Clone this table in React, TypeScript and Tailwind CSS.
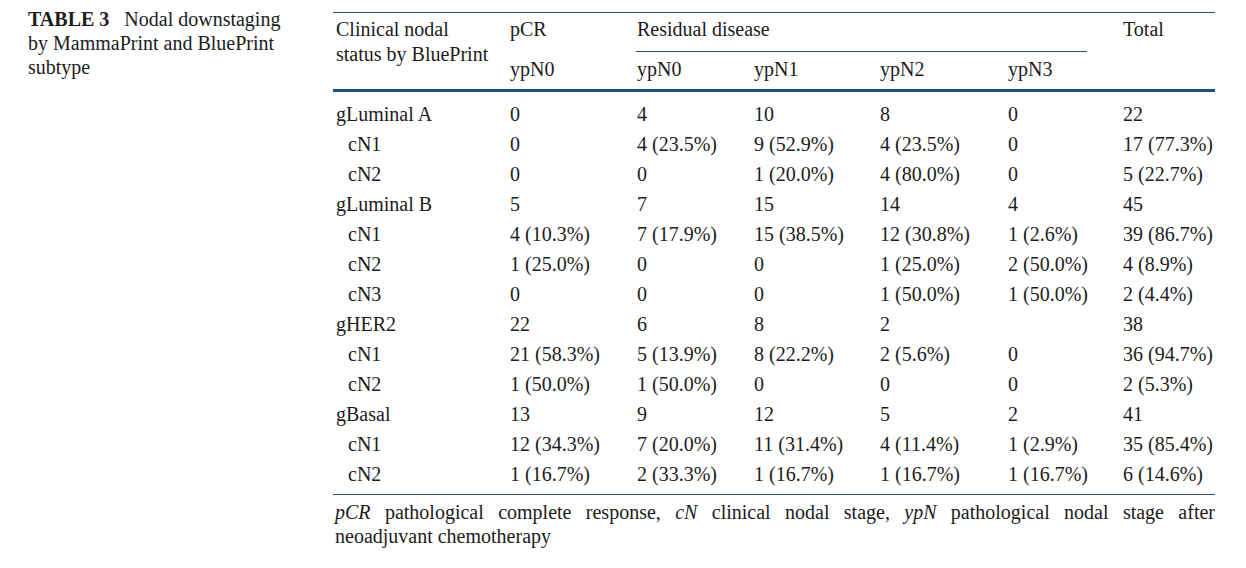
const rows: { label: string; sub?: boolean; cells: string[] }[] = [
  { label: "gLuminal A", cells: ["0", "4", "10", "8", "0", "22"] },
  { label: "cN1", sub: true, cells: ["0", "4 (23.5%)", "9 (52.9%)", "4 (23.5%)", "0", "17 (77.3%)"] },
  { label: "cN2", sub: true, cells: ["0", "0", "1 (20.0%)", "4 (80.0%)", "0", "5 (22.7%)"] },
  { label: "gLuminal B", cells: ["5", "7", "15", "14", "4", "45"] },
  { label: "cN1", sub: true, cells: ["4 (10.3%)", "7 (17.9%)", "15 (38.5%)", "12 (30.8%)", "1 (2.6%)", "39 (86.7%)"] },
  { label: "cN2", sub: true, cells: ["1 (25.0%)", "0", "0", "1 (25.0%)", "2 (50.0%)", "4 (8.9%)"] },
  { label: "cN3", sub: true, cells: ["0", "0", "0", "1 (50.0%)", "1 (50.0%)", "2 (4.4%)"] },
  { label: "gHER2", cells: ["22", "6", "8", "2", "", "38"] },
  { label: "cN1", sub: true, cells: ["21 (58.3%)", "5 (13.9%)", "8 (22.2%)", "2 (5.6%)", "0", "36 (94.7%)"] },
  { label: "cN2", sub: true, cells: ["1 (50.0%)", "1 (50.0%)", "0", "0", "0", "2 (5.3%)"] },
  { label: "gBasal", cells: ["13", "9", "12", "5", "2", "41"] },
  { label: "cN1", sub: true, cells: ["12 (34.3%)", "7 (20.0%)", "11 (31.4%)", "4 (11.4%)", "1 (2.9%)", "35 (85.4%)"] },
  { label: "cN2", sub: true, cells: ["1 (16.7%)", "2 (33.3%)", "1 (16.7%)", "1 (16.7%)", "1 (16.7%)", "6 (14.6%)"] },
];

const cols = "grid grid-cols-[174px_127px_117px_126px_128px_115px_95px]";

export default function App() {
  return (
    <div className="flex h-[568px] w-[1246px] bg-white font-['Liberation_Serif',serif] text-[20px] text-[#1c1c1c]">
      {/* caption */}
      <div className="w-[333px] shrink-0 pl-[28px] pt-[7px] pr-[40px] leading-[24px]">
        <b>TABLE 3</b>&nbsp;&nbsp; Nodal downstaging by MammaPrint and BluePrint subtype
      </div>

      {/* table */}
      <div className="w-[882px] shrink-0 pt-[12px]">
        <div className="border-t border-[#2b5165]">
          <div className={cols}>
            <div className="row-span-2 pl-[3px] pt-[4px] leading-[25px]">
              Clinical nodal
              <br />
              status by BluePrint
            </div>
            <div className="pl-[3px] pt-[4px] pb-[11px] leading-[24px]">pCR</div>
            <div className="col-span-4 pt-[4px] leading-[24px]">
              <div className="pl-[3px]">Residual disease</div>
              <div className="mt-[10px] ml-[2px] mr-[33px] border-b border-[#2b5165]" />
            </div>
            <div className="row-span-2 pl-[3px] pt-[4px] leading-[24px]">Total</div>
            {["ypN0", "ypN0", "ypN1", "ypN2", "ypN3"].map((h, i) => (
              <div key={i} className="pl-[3px] pt-[5px] pb-[8px] leading-[24px]">
                {h}
              </div>
            ))}
          </div>
        </div>

        <div className="border-t-[3px] border-b border-t-[#1d5383] border-b-[#2b5165] pt-[7px] pb-[5px]">
          {rows.map((r, i) => (
            <div key={i} className={`${cols} leading-[30px]`}>
              <div className={r.sub ? "pl-[15px]" : "pl-[3px]"}>{r.label}</div>
              {r.cells.map((c, j) => (
                <div key={j} className="pl-[3px] whitespace-nowrap">
                  {c}
                </div>
              ))}
            </div>
          ))}
        </div>

        {/* footnote */}
        <div className="mt-[5px] pl-[2px] leading-[24px]">
          <p className="text-justify [text-align-last:justify]">
            <i>pCR</i> pathological complete response, <i>cN</i> clinical nodal stage, <i>ypN</i> pathological nodal stage after
          </p>
          <p>neoadjuvant chemotherapy</p>
        </div>
      </div>
    </div>
  );
}
